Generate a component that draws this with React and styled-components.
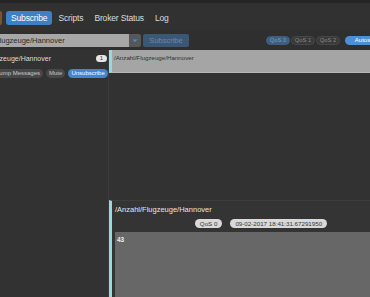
import styled, { createGlobalStyle } from "styled-components";

const GlobalStyle = createGlobalStyle`
  html, body {
    margin: 0;
    padding: 0;
    background: #323232;
    overflow: hidden;
  }
  body {
    font-family: "Liberation Sans", Arial, sans-serif;
  }
`;

const Shell = styled.div`
  width: 410px;
  height: 297px;
  display: flex;
  flex-direction: column;
  background: #323232;
  border-top: 3px solid #252525;
  box-sizing: border-box;
  overflow: hidden;
`;

const TabBar = styled.div`
  height: 28px;
  display: flex;
  align-items: center;
  gap: 1px;
  padding-top: 1px;
  box-sizing: border-box;
  background: #313131;
`;

const TabEdge = styled.span`
  width: 2px;
  height: 14px;
  margin-right: 3px;
  background: #7a5332;
  border-radius: 0 2px 2px 0;
`;

const Tab = styled.span`
  height: 14px;
  line-height: 14px;
  padding: 0 5px;
  border-radius: 3px;
  font-size: 8.5px;
  letter-spacing: -0.15px;
  color: ${(p) => (p.$active ? "#ffffff" : "#dcdcdc")};
  background: ${(p) => (p.$active ? "#3d80c6" : "transparent")};
`;

const Toolbar = styled.div`
  height: 19px;
  display: flex;
  align-items: center;
  padding-right: 19px;
  background: #2f2f2f;
`;

const TopicInput = styled.div`
  width: 129px;
  height: 13px;
  line-height: 13px;
  background: #a7a7a7;
  color: #2a2a2a;
  font-size: 7.5px;
  text-indent: -5px;
  overflow: hidden;
  white-space: nowrap;
`;

const DropButton = styled.div`
  width: 12px;
  height: 13px;
  display: flex;
  align-items: center;
  justify-content: center;
  background: #575757;
  border-radius: 0 2px 2px 0;
`;

const SubscribeButton = styled.div`
  width: 46px;
  height: 13px;
  line-height: 13px;
  margin-left: 2px;
  text-align: center;
  font-size: 7.5px;
  color: #6a88a8;
  background: #3a5875;
  border-radius: 2px;
`;

const QosGroup = styled.div`
  margin-left: auto;
  display: flex;
  gap: 1px;
`;

const QosButton = styled.div`
  width: 24px;
  height: 9px;
  line-height: 9px;
  text-align: center;
  font-size: 5.8px;
  border-radius: 5px;
  box-sizing: border-box;
  color: ${(p) => (p.$active ? "#7d9ebf" : "#8a8a8a")};
  background: ${(p) => (p.$active ? "#3c5e80" : "#393939")};
  border: 1px solid ${(p) => (p.$active ? "#3c5e80" : "#474747")};
  line-height: 7px;
`;

const AutoButton = styled.div`
  width: 46px;
  height: 9px;
  line-height: 9px;
  margin-left: 5px;
  text-align: center;
  font-size: 6px;
  color: #ffffff;
  background: #4a8fd8;
  border-radius: 5px;
`;

const Main = styled.div`
  flex: 1;
  display: flex;
  min-height: 0;
`;

const LeftPanel = styled.div`
  width: 108px;
  border-right: 1px solid #3b3b3b;
  display: flex;
  flex-direction: column;
  overflow: hidden;
`;

const TopicRow = styled.div`
  height: 16px;
  display: flex;
  align-items: center;
  justify-content: space-between;
  padding-right: 1px;
`;

const TopicName = styled.span`
  margin-left: -14px;
  font-size: 7px;
  color: #dedede;
  white-space: nowrap;
`;

const Badge = styled.span`
  min-width: 11px;
  height: 7px;
  line-height: 7px;
  text-align: center;
  font-size: 6px;
  color: #333333;
  background: #e6e6e6;
  border-radius: 4px;
`;

const ActionRow = styled.div`
  display: flex;
  align-items: center;
  gap: 3px;
  margin-top: 3px;
  padding-right: 1px;
`;

const Pill = styled.span`
  height: 9px;
  line-height: 9px;
  padding: 0 3px;
  font-size: 6px;
  white-space: nowrap;
  border-radius: 5px;
  color: ${(p) => (p.$primary ? "#ffffff" : "#c8c8c8")};
  background: ${(p) => (p.$primary ? "#3f86d3" : "#474747")};
  &:first-child {
    margin-left: -8px;
  }
  &:last-child {
    margin-left: auto;
  }
`;

const RightColumn = styled.div`
  flex: 1;
  display: flex;
  flex-direction: column;
  min-width: 0;
`;

const MessageList = styled.div`
  flex: 1;
`;

const MessageItem = styled.div`
  height: 23px;
  box-sizing: border-box;
  padding: 4px 2px;
  background: #a5a5a5;
  border-left: 3px solid #8fdede;
  border-bottom: 1px solid #b8b8b8;
  font-size: 6.2px;
  color: #303030;
`;

const DetailPanel = styled.div`
  height: 97px;
  display: flex;
  flex-direction: column;
  border-top: 1px solid #3e3e3e;
  border-left: 3px solid #8fdede;
  background: #343434;
  box-sizing: border-box;
`;

const DetailTitle = styled.div`
  padding: 4px 0 0 3px;
  font-size: 7.5px;
  color: #e6e6e6;
`;

const MetaRow = styled.div`
  display: flex;
  justify-content: center;
  gap: 8px;
  margin-top: 5px;
`;

const MetaPill = styled.span`
  height: 9px;
  line-height: 9px;
  padding: 0 5px;
  font-size: 6.2px;
  color: #333333;
  background: #d9d9d9;
  border-radius: 5px;
`;

const Payload = styled.div`
  flex: 1;
  margin: 4px 0 0 3px;
  padding: 4px 2px;
  background: #676767;
  font-size: 6.5px;
  font-weight: bold;
  color: #f0f0f0;
`;

function Chevron() {
  return (
    <svg width="6" height="4" viewBox="0 0 6 4">
      <path d="M0.5 0.5 L3 3 L5.5 0.5 Z" fill="#4a90d9" />
    </svg>
  );
}

export default function App() {
  const tabs = ["Subscribe", "Scripts", "Broker Status", "Log"];
  const qos = ["QoS 0", "QoS 1", "QoS 2"];

  return (
    <>
      <GlobalStyle />
      <Shell>
        <TabBar>
          <TabEdge />
          {tabs.map((t, i) => (
            <Tab key={t} $active={i === 0}>
              {t}
            </Tab>
          ))}
        </TabBar>

        <Toolbar>
          <TopicInput>Flugzeuge/Hannover</TopicInput>
          <DropButton>
            <Chevron />
          </DropButton>
          <SubscribeButton>Subscribe</SubscribeButton>
          <QosGroup>
            {qos.map((q, i) => (
              <QosButton key={q} $active={i === 0}>
                {q}
              </QosButton>
            ))}
          </QosGroup>
          <AutoButton>Autoscroll</AutoButton>
        </Toolbar>

        <Main>
          <LeftPanel>
            <TopicRow>
              <TopicName>Flugzeuge/Hannover</TopicName>
              <Badge>1</Badge>
            </TopicRow>
            <ActionRow>
              <Pill>Dump Messages</Pill>
              <Pill>Mute</Pill>
              <Pill $primary>Unsubscribe</Pill>
            </ActionRow>
          </LeftPanel>

          <RightColumn>
            <MessageList>
              <MessageItem>/Anzahl/Flugzeuge/Hannover</MessageItem>
            </MessageList>
            <DetailPanel>
              <DetailTitle>/Anzahl/Flugzeuge/Hannover</DetailTitle>
              <MetaRow>
                <MetaPill>QoS 0</MetaPill>
                <MetaPill>09-02-2017 18:41:31.67291950</MetaPill>
              </MetaRow>
              <Payload>43</Payload>
            </DetailPanel>
          </RightColumn>
        </Main>
      </Shell>
    </>
  );
}
